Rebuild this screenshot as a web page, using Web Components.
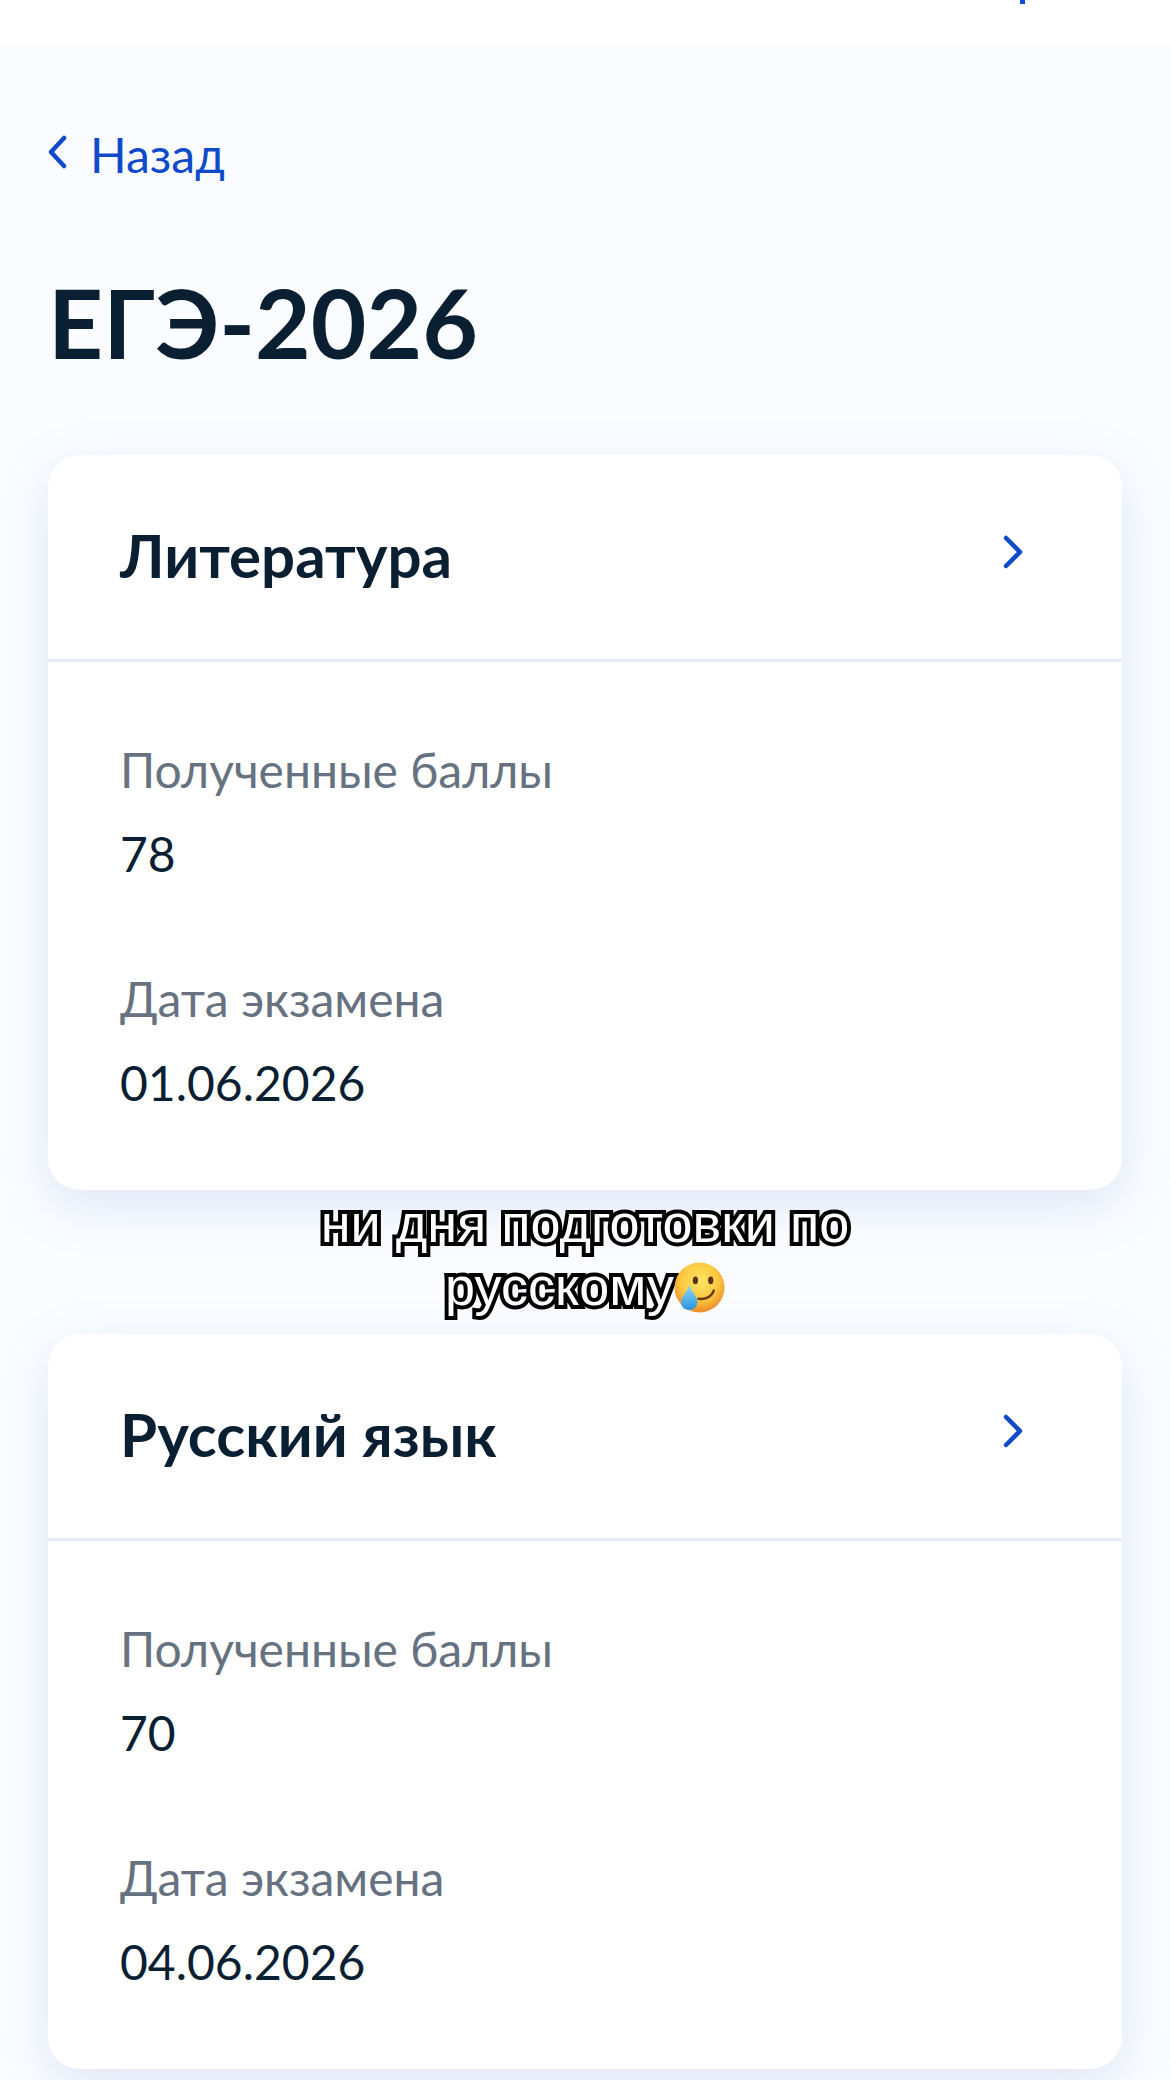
<!DOCTYPE html>
<html lang="ru">
<head>
<meta charset="utf-8">
<title>ЕГЭ-2026</title>
<style>
	html,body{margin:0;padding:0;background:#fafcff;}
	body{font-family:"Lato","Noto Sans",sans-serif;color:#0b1f33;width:1170px;height:2080px;overflow:hidden;}
</style>
</head>
<body>

<top-bar></top-bar>
<page-main>
	<back-link>Назад</back-link>
	<page-title>ЕГЭ-2026</page-title>
	<exam-card subject="Литература">
		<exam-field label="Полученные баллы">78</exam-field>
		<exam-field label="Дата экзамена">01.06.2026</exam-field>
	</exam-card>
	<video-caption>ни дня подготовки по<br>русскому<sad-emoji></sad-emoji></video-caption>
	<exam-card subject="Русский язык">
		<exam-field label="Полученные баллы">70</exam-field>
		<exam-field label="Дата экзамена">04.06.2026</exam-field>
	</exam-card>
</page-main>

<script>
function shadowFrom(el, html){
	const shadow = el.attachShadow({mode:'open'});
	shadow.innerHTML = html;
	return shadow;
}

class TopBar extends HTMLElement{
	constructor(){
		super();
		shadowFrom(this, `
			<style>
			:host{display:flex;justify-content:flex-end;align-items:flex-start;height:46px;background:#fff;padding-right:145px;}
			.tail{width:5px;height:4px;background:#0d4cd3;}
			</style>
			<div class="tail"></div>
		`);
	}
}

class PageMain extends HTMLElement{
	constructor(){
		super();
		shadowFrom(this, `
			<style>
			:host{display:block;padding:0 48px;}
			</style>
			<slot></slot>
		`);
	}
}

class BackLink extends HTMLElement{
	constructor(){
		super();
		shadowFrom(this, `
			<style>
			:host{display:flex;align-items:center;gap:23px;padding-top:80px;height:58px;color:#0f4bc9;font-size:48px;line-height:58px;}
			svg{width:19px;height:34px;flex:none;margin-top:-6px;}
			</style>
			<svg viewBox="0 0 19 34" fill="none" stroke="#0f4bc9" stroke-width="4.5" stroke-linecap="round" stroke-linejoin="round"><path d="M16 3 L3 17 L16 31"/></svg>
			<slot></slot>
		`);
	}
}

class PageTitle extends HTMLElement{
	constructor(){
		super();
		shadowFrom(this, `
			<style>
			:host{display:block;margin:82px 0 77px;font-size:96px;line-height:112px;font-weight:700;color:#0b1f33;}
			</style>
			<slot></slot>
		`);
	}
}

class ExamCard extends HTMLElement{
	constructor(){
		super();
		const shadow = shadowFrom(this, `
			<style>
			:host{display:block;height:735px;background:#fff;border-radius:32px;box-shadow:0 16px 48px rgba(150,170,220,.26);}
			.head{display:flex;justify-content:space-between;align-items:center;height:204px;padding:0 98px 0 72px;border-bottom:3px solid #e6ebf5;}
			h2{margin:-5px 0 0;font-size:60px;line-height:72px;font-weight:700;color:#0b1f33;}
			svg{width:21px;height:34px;margin-top:-10px;}
			.body{display:flex;flex-direction:column;gap:89px;padding:80px 72px 0;}
			</style>
			<div class="head">
				<h2></h2>
				<svg viewBox="0 0 21 34" fill="none" stroke="#0f4bc9" stroke-width="4.5" stroke-linecap="round" stroke-linejoin="round"><path d="M3 3 L17 17 L3 31"/></svg>
			</div>
			<div class="body"><slot></slot></div>
		`);
		this.titleEl = shadow.querySelector('h2');
	}
	connectedCallback(){
		this.titleEl.textContent = this.getAttribute('subject');
	}
}

class ExamField extends HTMLElement{
	constructor(){
		super();
		const shadow = shadowFrom(this, `
			<style>
			:host{display:block;font-size:48px;line-height:56px;color:#0b1f33;}
			.label{color:#66727f;margin-bottom:28px;}
			</style>
			<div class="label"></div>
			<slot></slot>
		`);
		this.labelEl = shadow.querySelector('.label');
	}
	connectedCallback(){
		this.labelEl.textContent = this.getAttribute('label');
	}
}

class VideoCaption extends HTMLElement{
	constructor(){
		super();
		shadowFrom(this, `
			<style>
			:host{display:flex;align-items:center;justify-content:center;height:144px;text-align:center;font-family:"Liberation Sans",Arial,sans-serif;font-size:54px;line-height:63px;color:#fff;-webkit-text-stroke:8px #000;paint-order:stroke fill;}
			div{margin-top:-14px;}
			</style>
			<div><slot></slot></div>
		`);
	}
}

class SadEmoji extends HTMLElement{
	constructor(){
		super();
		shadowFrom(this, `
			<style>
			:host{display:inline-block;width:51px;height:51px;vertical-align:-8px;}
			svg{display:block;width:100%;height:100%;}
			</style>
			<svg viewBox="0 0 50 50">
				<defs>
					<radialGradient id="face" cx="50%" cy="38%" r="62%">
						<stop offset="0" stop-color="#fde46a"/>
						<stop offset=".6" stop-color="#fbc93f"/>
						<stop offset="1" stop-color="#ec8a2a"/>
					</radialGradient>
					<linearGradient id="tear" x1="0" y1="0" x2="0" y2="1">
						<stop offset="0" stop-color="#8fdcf6"/>
						<stop offset="1" stop-color="#2b92dd"/>
					</linearGradient>
				</defs>
				<circle cx="25" cy="25" r="24.5" fill="url(#face)"/>
				<ellipse cx="21" cy="18" rx="2.6" ry="3.8" fill="#5b3413"/>
				<ellipse cx="36" cy="18" rx="2.6" ry="3.8" fill="#5b3413"/>
				<path d="M24 36 C31 37 37 34 39 28" fill="none" stroke="#6b3a12" stroke-width="2.4" stroke-linecap="round"/>
				<path d="M15 22 C17 30 23 33 23 39 C23 44 19 47 15 47 C10 47 7 44 7 39 C7 33 13 30 15 22Z" fill="url(#tear)"/>
			</svg>
		`);
	}
}

customElements.define('top-bar', TopBar);
customElements.define('page-main', PageMain);
customElements.define('back-link', BackLink);
customElements.define('page-title', PageTitle);
customElements.define('exam-card', ExamCard);
customElements.define('exam-field', ExamField);
customElements.define('video-caption', VideoCaption);
customElements.define('sad-emoji', SadEmoji);
</script>
</body>
</html>
